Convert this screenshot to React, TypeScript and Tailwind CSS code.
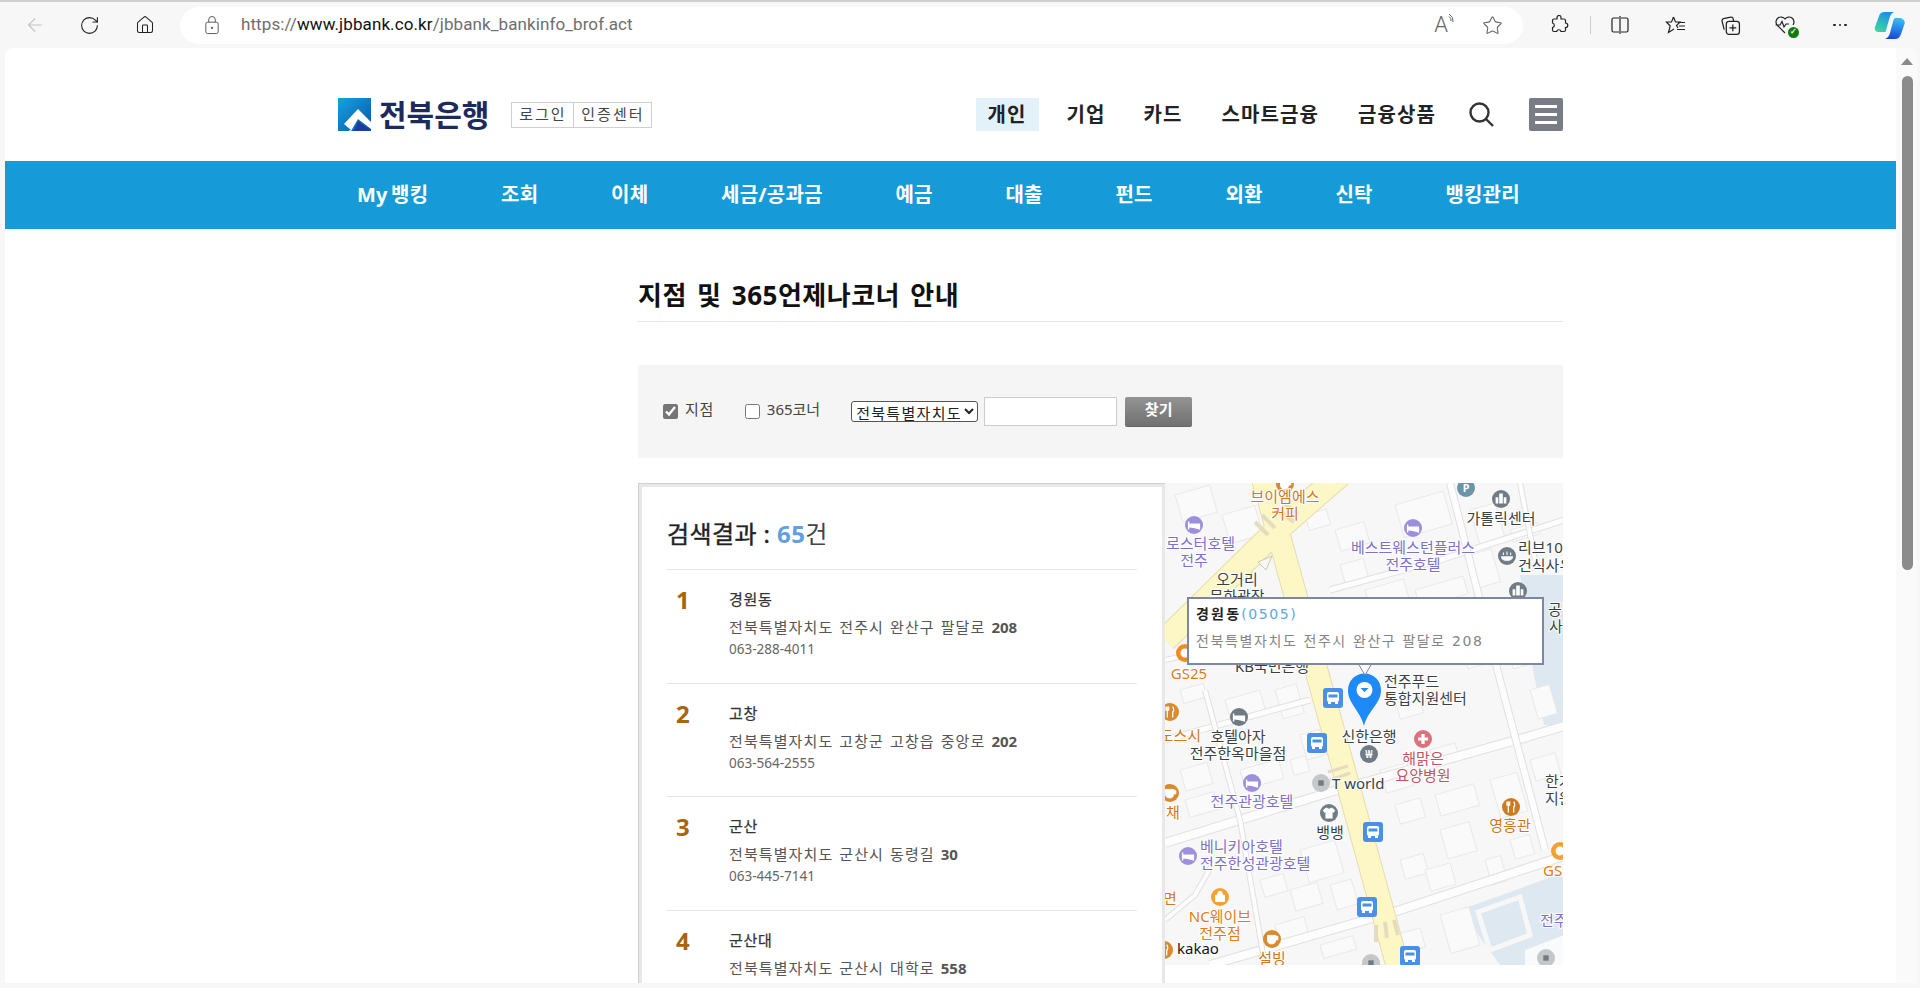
import React from "react";
import { ArrowLeft, RotateCw, Home, Star } from "lucide-react";

const NAV_TOP = ["기업", "카드", "스마트금융", "금융상품"];
const NAV_MAIN = ["My 뱅킹", "조회", "이체", "세금/공과금", "예금", "대출", "펀드", "외환", "신탁", "뱅킹관리"];
const BRANCHES = [
  { no: 1, name: "경원동", addr: "전북특별자치도 전주시 완산구 팔달로", num: "208", tel: "063-288-4011" },
  { no: 2, name: "고창", addr: "전북특별자치도 고창군 고창읍 중앙로", num: "202", tel: "063-564-2555" },
  { no: 3, name: "군산", addr: "전북특별자치도 군산시 동령길", num: "30", tel: "063-445-7141" },
  { no: 4, name: "군산대", addr: "전북특별자치도 군산시 대학로", num: "558", tel: "" },
];

// map drawing data, in page coordinates (viewBox starts at the map's corner)
const ROADS: [string, number][] = [
  ["M1165 843 L1327 793 L1527 737 L1564 726", 8],
  ["M1210 965 L1400 910 L1543 863 L1564 856", 8],
  ["M1330 590 L1440 560 L1564 520", 5],
  ["M1450 483 L1500 680 L1545 850", 6],
  ["M1165 740 L1215 726 L1310 700", 5],
  ["M1205 690 L1240 820 L1265 965", 4],
  ["M1165 920 L1195 895 L1215 860", 4],
  ["M1165 660 L1255 640", 4],
  ["M1520 483 L1535 560", 4],
];
const BLOCKS: number[][] = [
  [1175, 495, 36, 28], [1222, 515, 34, 30], [1305, 515, 22, 16], [1335, 530, 30, 22], [1340, 565, 24, 20],
  [1395, 505, 50, 34], [1365, 590, 40, 20], [1415, 590, 50, 18], [1470, 510, 26, 36], [1470, 555, 22, 34],
  [1510, 530, 28, 12], [1505, 640, 26, 30], [1530, 690, 20, 30], [1180, 690, 24, 14], [1225, 700, 36, 24],
  [1275, 690, 22, 30], [1300, 735, 20, 26], [1180, 770, 28, 22], [1185, 800, 30, 18], [1240, 770, 40, 20],
  [1290, 760, 16, 16], [1435, 795, 40, 22], [1430, 750, 26, 18], [1380, 770, 28, 24], [1395, 805, 26, 20],
  [1440, 830, 30, 30], [1400, 860, 24, 20], [1425, 870, 26, 22], [1300, 850, 36, 34], [1260, 880, 24, 18],
  [1290, 890, 28, 22], [1330, 885, 22, 26], [1275, 925, 30, 18], [1320, 945, 34, 14], [1440, 915, 30, 40],
  [1395, 935, 26, 20], [1490, 780, 28, 40], [1485, 860, 16, 26], [1510, 840, 20, 20], [1530, 760, 26, 22],
  [1190, 620, 30, 12], [1280, 640, 30, 18], [1460, 640, 22, 30], [1395, 700, 24, 20],
];
const LABELS: [string, number, number, string, ("middle" | "start" | "end")?][] = [
  ["브이엠에스", 1285, 502, "#d0761c"], ["커피", 1285, 519, "#d0761c"],
  ["로스터호텔", 1235, 549, "#7d70c8", "end"], ["전주", 1194, 566, "#7d70c8"],
  ["가톨릭센터", 1501, 524, "#3a3f44"], ["베스트웨스턴플러스", 1413, 553, "#7d70c8"], ["전주호텔", 1413, 570, "#7d70c8"],
  ["리브10", 1518, 553, "#3a3f44", "start"], ["건식사우", 1518, 571, "#3a3f44", "start"],
  ["오거리", 1237, 585, "#3a3f44"], ["문화광장", 1237, 602, "#3a3f44"],
  ["공덕", 1548, 615, "#3a3f44", "start"], ["사", 1549, 632, "#3a3f44", "start"],
  ["GS25", 1189, 679, "#e07b1a"], ["KB국민은행", 1272, 672, "#3a3f44"],
  ["전주푸드", 1384, 687, "#3a3f44", "start"], ["통합지원센터", 1384, 704, "#3a3f44", "start"],
  ["신한은행", 1369, 742, "#3a3f44"], ["호텔아자", 1238, 742, "#3a3f44"], ["전주한옥마을점", 1238, 759, "#3a3f44"],
  ["도스시", 1201, 741, "#d0761c", "end"], ["해맑은", 1423, 764, "#c4545f"], ["요양병원", 1423, 781, "#c4545f"],
  ["T world", 1332, 789, "#3a3f44", "start"], ["전주관광호텔", 1252, 807, "#7d70c8"], ["채", 1173, 818, "#d0761c"],
  ["영흥관", 1510, 831, "#d0761c"], ["한가", 1545, 787, "#3a3f44", "start"], ["지원", 1545, 804, "#3a3f44", "start"],
  ["뱅뱅", 1330, 838, "#3a3f44"], ["베니키아호텔", 1200, 852, "#7d70c8", "start"], ["전주한성관광호텔", 1200, 869, "#7d70c8", "start"],
  ["면", 1170, 904, "#d0761c"], ["NC웨이브", 1220, 922, "#e07b1a"], ["전주점", 1220, 939, "#e07b1a"],
  ["kakao", 1177, 954, "#111111", "start"], ["설빙", 1272, 964, "#d0761c"],
  ["GS2", 1543, 876, "#e07b1a", "start"], ["전주", 1540, 926, "#7d70c8", "start"],
];
const POIS: [number, number, string, string][] = [
  [1285, 484, "#d98a2e", "cup"], [1194, 525, "#9d8fdb", "bed"], [1466, 488, "#6c94a9", "P"], [1501, 499, "#6f7c85", "bldg"],
  [1413, 528, "#9d8fdb", "bed"], [1507, 556, "#6f7c85", "spa"], [1518, 591, "#6f7c85", "bldg"], [1185, 653, "#f08a24", "ring"],
  [1239, 717, "#6f7c85", "bed"], [1170, 712, "#d98a2e", "fork"], [1369, 754, "#6f7c85", "won"], [1423, 739, "#d9737d", "plus"],
  [1321, 783, "#c5c7c9", "dot"], [1252, 783, "#9d8fdb", "bed"], [1170, 793, "#d98a2e", "cup"], [1511, 807, "#cf7a1e", "fork"],
  [1329, 813, "#6f7c85", "shirt"], [1188, 856, "#9d8fdb", "bed"], [1220, 897, "#f5a030", "bag"], [1164, 950, "#d98a2e", "fork"],
  [1272, 939, "#d98a2e", "cup"], [1560, 851, "#f5a030", "ring"], [1371, 963, "#c5c7c9", "dot"], [1546, 958, "#c5c7c9", "dot"],
];
const BUSES = [[1333, 698], [1317, 743], [1373, 832], [1367, 907], [1410, 956]];

// white glyph inside a round map marker
const PoiGlyph = ({ kind, c }: { kind: string; c: string }) => {
  if (kind === "bed") return <path d="M-6 -4 V5 M-6 2 H6 V5 M6 2 V-1 H-2 V2 M-5 -1 h2 v2 h-2 z" stroke="#fff" strokeWidth="1.6" fill="#fff" />;
  if (kind === "P") return <text x="0" y="4.500" textAnchor="middle" fill="#fff" className="text-[12px] font-bold">P</text>;
  if (kind === "bldg") return <path d="M-2 5 V-6 H2 V5 Z M-6 5 V-2 H-3 V5 Z M3 5 V-2 H6 V5 Z" fill="#fff" />;
  if (kind === "spa") return <path d="M-6 1 C-6 6 6 6 6 1 Z M-4 -1 V-4 M0 -1 V-5 M4 -1 V-4" fill="#fff" stroke="#fff" strokeWidth="1.2" />;
  if (kind === "ring") return <circle r="5" fill="#fff" />;
  if (kind === "cup") return <path d="M-5 -4 H4 V1 A4 4 0 0 1 -5 1 Z M4 -3 H6.500 V1 H4" fill="#fff" stroke="#fff" />;
  if (kind === "fork") return <path d="M-3 -6 V-1 M-4.500 -6 V-2 H-1.500 V-6 M-3 -2 V6 M3 -6 C5 -3 4 0 3 0 V6" fill="none" stroke="#fff" strokeWidth="1.4" />;
  if (kind === "won") return <text x="0" y="4" textAnchor="middle" fill="#fff" className="text-[11px] font-bold">₩</text>;
  if (kind === "plus") return <path d="M-1.800 -5.500 H1.800 V-1.800 H5.500 V1.800 H1.800 V5.500 H-1.800 V1.800 H-5.500 V-1.800 H-1.800 Z" fill="#fff" />;
  if (kind === "dot") return <rect x="-3" y="-3" width="6" height="6" fill="#6f7c85" />;
  if (kind === "shirt") return <path d="M-3 -6 L-7 -3 L-5 0 L-4 -1 V6 H4 V-1 L5 0 L7 -3 L3 -6 Q0 -3.500 -3 -6 Z" fill="#fff" />;
  if (kind === "bag") return <path d="M-5 -2 H5 V5 H-5 Z M-2.500 -2 V-4 a2.500 2.500 0 0 1 5 0 V-2" fill="#fff" stroke="#fff" />;
  return <rect x="-4" y="-3" width="8" height="6" fill="#fff" stroke={c} />;
};

const BranchMap = () => (
  <div className="relative h-[482px] w-[398px] shrink-0 overflow-hidden">
    <svg viewBox="1165 483 398 482" className="block h-[482px] w-[398px] bg-[#f7f7f7]">
      <path d="M1520 575 h44 v150 h-20 l-12 -60 z" fill="#dde8f0" />
      <path d="M1460 910 L1543 880 L1564 872 V965 H1500 Z" fill="#dde8f0" />
      <path d="M1478 912 L1520 897 L1530 935 L1490 950 Z" fill="#dde8f0" stroke="#f7f7f7" strokeWidth="5" />
      <path d="M1525 950 L1564 935 V965 H1525 Z" fill="#f8fafb" />
      {BLOCKS.map(([x, y, w, h]) => (
        <rect
          key={`${x}-${y}`}
          x={x}
          y={y}
          width={w}
          height={h}
          fill="#fafafa"
          stroke="#e8e8e8"
          transform={`rotate(-16 ${x} ${y})`}
        />
      ))}
      {ROADS.map(([d, w]) => (
        <g key={d} fill="none">
          <path d={d} stroke="#e0e0e0" strokeWidth={w + 2} />
          <path d={d} stroke="#fdfdfd" strokeWidth={w} />
        </g>
      ))}
      <g fill="none">
        <path d="M1262 475 L1333 730 L1400 975" stroke="#e6dcae" strokeWidth="24" />
        <path d="M1340 475 L1277 530 L1165 640" stroke="#e6dcae" strokeWidth="25" />
        <path d="M1262 475 L1333 730 L1400 975" stroke="#fdf6c5" strokeWidth="22" />
        <path d="M1340 475 L1277 530 L1165 640" stroke="#fdf6c5" strokeWidth="23" />
      </g>
      <path d="M1258 562 L1272 556 L1266 570 Z" fill="#f7f7f7" stroke="#cfc9a8" />
      <g stroke="#e4dcc0" strokeWidth="4">
        <path d="M1255 522 L1268 535 M1262 515 L1275 528 M1280 512 L1294 522 M1284 504 L1298 514" />
        <path d="M1328 772 L1348 766 M1330 780 L1350 773" strokeWidth="3" />
        <path d="M1376 925 L1376 942 M1385 922 L1387 938 M1394 920 L1398 935" />
      </g>
      {POIS.map(([x, y, c, kind]) => (
        <g key={`${x}-${y}`} transform={`translate(${x} ${y})`}>
          <circle r="9" fill={c} />
          <g transform="scale(0.9)">
            <PoiGlyph kind={kind} c={c} />
          </g>
        </g>
      ))}
      {LABELS.map(([t, x, y, c, anchor]) => (
        <text
          key={`${t}-${x}`}
          x={x}
          y={y}
          fill={c}
          textAnchor={anchor ?? "middle"}
          stroke="#fff"
          strokeWidth="2"
          className="text-[15px] [paint-order:stroke]"
        >
          {t}
        </text>
      ))}
      {BUSES.map(([x, y]) => (
        <g key={x}>
          <rect x={x - 10} y={y - 10} width="20" height="20" rx="3" fill="#4a90e8" />
          <rect x={x - 6} y={y - 6} width="12" height="10" rx="2" fill="#fff" />
          <rect x={x - 4.5} y={y - 3.5} width="9" height="3" fill="#4a90e8" />
          <rect x={x - 5} y={y + 4} width="3" height="2" fill="#fff" />
          <rect x={x + 2} y={y + 4} width="3" height="2" fill="#fff" />
        </g>
      ))}
      <path d="M1364 726 C1360 710 1348 704 1348 690 A16.5 16.5 0 0 1 1381 690 C1381 704 1368 710 1364 726 Z" fill="#1e8af7" />
      <circle cx="1364.5" cy="690" r="8" fill="#fff" />
      <path d="M1360.5 688 h8 l-4 4 z" fill="#1e8af7" />
      <path d="M1359 665 L1365 675 L1371 665" fill="#fff" stroke="#7d86a5" />
    </svg>
    {/* info window over the marker */}
    <div className="absolute left-[22px] top-[114px] h-[68px] w-[357px] border-2 border-[#7d86a5] bg-white pl-[7px] pt-[3px] font-['DejaVu_Sans','Noto_Sans_CJK_KR',sans-serif]">
      <p className="text-[14px] font-bold leading-[24px] tracking-[2.2px] text-[#222]">
        경원동<span className="font-normal tracking-[1.6px] text-[#5aa9e6]">(0505)</span>
      </p>
      <p className="mt-[3px] text-[14px] leading-[24px] tracking-[1.6px] text-[#858585]">전북특별자치도 전주시 완산구 팔달로 208</p>
    </div>
  </div>
);

const BrowserBar = () => (
  <div className="flex h-12 shrink-0 items-center border-t-2 border-[#cfcfcf] bg-[#f7f7f7] font-['Roboto',sans-serif]">
    <div className="flex w-[180px] shrink-0 items-center text-[#222]">
      <ArrowLeft className="ml-[24px] h-[22px] w-[22px] text-[#c4c4c4]" strokeWidth={1.25} />
      <RotateCw className="ml-[33px] h-[21px] w-[21px]" strokeWidth={1.25} />
      <Home className="ml-[35px] h-[20px] w-[20px]" strokeWidth={1.25} />
    </div>
    <div className="flex h-[37px] w-[1343px] shrink-0 items-center rounded-full bg-white">
      <svg viewBox="0 0 16 20" className="ml-[24px] h-[19px] w-[16px]" fill="none" stroke="#555">
        <rect x="1.5" y="6.5" width="13" height="12" rx="2" />
        <path d="M4.5 6.5 V4 a3.5 3.5 0 0 1 7 0 V6.5" />
        <circle cx="8" cy="12.5" r="0.8" fill="#555" />
      </svg>
      <span className="ml-[21px] text-[17px] tracking-[0.1px] text-[#6e6e6e]">
        https://<span className="text-[#111]">www.jbbank.co.kr</span>/jbbank_bankinfo_brof.act
      </span>
      <div className="ml-auto flex items-center pr-[20px]">
        <span className="relative text-[22px] font-light leading-none text-[#666]">
          A
          <svg viewBox="0 0 8 10" className="absolute -right-[8px] -top-[1px] h-[10px] w-[8px]" fill="none" stroke="#666">
            <path d="M1 1 Q6 4 5 9 M1 3.5 Q3.5 5 3 8" />
          </svg>
        </span>
        <Star className="ml-[34px] h-[21px] w-[21px] text-[#666]" strokeWidth={1.25} />
      </div>
    </div>
    <div className="relative flex flex-1 items-center text-[#222]">
      <svg viewBox="0 0 20 20" className="ml-[26px] h-[20px] w-[20px]" fill="none" stroke="#222" strokeWidth="1.2">
        <path d="M8 2.5 a2 2 0 0 1 4 0 V4 h3 a1.5 1.5 0 0 1 1.5 1.5 V8 a2.3 2.3 0 0 1 0 4.6 V15 a1.5 1.5 0 0 1 -1.5 1.5 H12 a2.2 2.2 0 0 0 -4.3 0 H5 A1.5 1.5 0 0 1 3.5 15 V12.5 a2.3 2.3 0 0 0 0 -4.5 V5.5 A1.5 1.5 0 0 1 5 4 H8 Z" />
      </svg>
      <div className="ml-[21px] h-[18px] w-px bg-[#ccc]" />
      <svg viewBox="0 0 20 20" className="ml-[19px] h-[20px] w-[20px]" fill="none" stroke="#222" strokeWidth="1.2">
        <path d="M9 3 H3.5 A1.5 1.5 0 0 0 2 4.5 V15.5 A1.5 1.5 0 0 0 3.5 17 H9 M11 3 H16.5 A1.5 1.5 0 0 1 18 4.5 V15.5 A1.5 1.5 0 0 1 16.5 17 H11 M10 1 V19" />
      </svg>
      <svg viewBox="0 0 22 20" className="ml-[35px] h-[20px] w-[22px]" fill="none" stroke="#222" strokeWidth="1.2">
        <path d="M8.5 2 L10.5 7 H15 L11.5 10.5 L13 13 M8.5 2 L6.5 7 H1.5 L5.2 11 L3.5 17.5 L9 14" />
        <path d="M13 7.5 H20 M14 11 H20 M12 14.5 H20" />
      </svg>
      <svg viewBox="0 0 20 20" className="ml-[33px] h-[21px] w-[21px]" fill="none" stroke="#222" strokeWidth="1.2">
        <rect x="6" y="6" width="12.5" height="12.5" rx="2.5" />
        <path d="M12.2 9 V15.5 M9 12.2 H15.5 M4 14 L2 6 a2 2 0 0 1 1.5 -2.5 L10 2 a2 2 0 0 1 2.5 1.5 L13 6" />
      </svg>
      <div className="relative ml-[33px] h-[21px] w-[22px]">
        <svg viewBox="0 0 22 21" className="h-[21px] w-[22px]" fill="none" stroke="#222" strokeWidth="1.2">
          <path d="M11 18 L3 10 a4.8 4.8 0 0 1 8 -6 a4.8 4.8 0 0 1 8 6 M1.5 10 H6 L8 6.5 L10 12 L12 9 H15" />
        </svg>
        <span className="absolute -bottom-[2px] -right-[3px] flex h-[11px] w-[11px] items-center justify-center rounded-full bg-[#107c10] text-[8px] font-bold leading-none text-white">
          ✓
        </span>
      </div>
      <div className="ml-[37px] flex gap-[3px]">
        <span className="h-[2.5px] w-[2.5px] rounded-full bg-[#222]" />
        <span className="h-[2.5px] w-[2.5px] rounded-full bg-[#222]" />
        <span className="h-[2.5px] w-[2.5px] rounded-full bg-[#222]" />
      </div>
      <svg viewBox="0 0 31 27" className="ml-[27px] h-[27px] w-[31px]">
        <defs>
          <linearGradient id="cpA" x1="0.7" y1="0" x2="0.2" y2="1">
            <stop offset="0" stopColor="#1b8fe8" />
            <stop offset="1" stopColor="#3fd6a0" />
          </linearGradient>
          <linearGradient id="cpB" x1="0.6" y1="0" x2="0.4" y2="1">
            <stop offset="0" stopColor="#35c0f5" />
            <stop offset="1" stopColor="#1a45d8" />
          </linearGradient>
        </defs>
        <path d="M10 0 H20 C17.500 1 16.500 3 15.500 6 L11.500 20 H5 C2 20 0 18 1 15 L5 4 C6 1 8 0 10 0 Z" fill="url(#cpA)" />
        <path d="M21 6 H25.500 C29 6 31.500 9 30.500 12 L27 22 C26 25 24 27 21 27 H11 C14 26 15 24 16 21 L19.500 8 C20 7 20.500 6 21 6 Z" fill="url(#cpB)" />
      </svg>
    </div>
  </div>
);

const Header = () => (
  <header className="flex h-[113px] items-center pl-[333px] pr-[333px] pt-[20px]">
    <svg viewBox="0 0 33 33" className="h-[33px] w-[33px] shrink-0">
      <defs>
        <linearGradient id="lgA" x1="0" y1="0" x2="1" y2="1">
          <stop offset="0" stopColor="#16a3de" />
          <stop offset="1" stopColor="#0a55a8" />
        </linearGradient>
      </defs>
      <rect width="33" height="33" fill="url(#lgA)" />
      <path d="M16 33 L20 23 L33 33 Z" fill="#1c3d98" />
      <path d="M6 26 L20 11 L33 24 V31 L20 21 L13 33 H10 L13 32 Z" fill="#fff" />
    </svg>
    <span className="ml-[8px] text-[30px] font-bold leading-none text-[#1c2b5c]">전북은행</span>
    <div className="ml-[22px] flex h-[26px] items-center border border-[#cfcfcf] text-[15px] leading-none tracking-[2px] text-[#444]">
      <span className="flex h-full w-[62px] items-center justify-center border-r border-[#cfcfcf]">로그인</span>
      <span className="flex h-full w-[77px] items-center justify-center">인증센터</span>
    </div>
    <nav className="ml-auto flex items-center text-[20px] font-bold tracking-[1.1px] text-[#222]">
      <span className="flex h-[33px] w-[63px] items-center justify-center bg-[#e3f1f9]">개인</span>
      <span className="ml-[28px]">{NAV_TOP[0]}</span>
      <span className="ml-[38px]">{NAV_TOP[1]}</span>
      <span className="ml-[39px]">{NAV_TOP[2]}</span>
      <span className="ml-[39px]">{NAV_TOP[3]}</span>
      <svg viewBox="0 0 25 25" className="ml-[33px] h-[25px] w-[25px]" fill="none" stroke="#333" strokeWidth="2.4">
        <circle cx="10.5" cy="10.5" r="9" />
        <path d="M17 17 L24 24" />
      </svg>
      <div className="ml-[35px] flex h-[33px] w-[34px] flex-col items-center justify-center gap-[5px] rounded-[2px] bg-[#797c85]">
        <span className="h-[3px] w-[22px] bg-white" />
        <span className="h-[3px] w-[22px] bg-white" />
        <span className="h-[3px] w-[22px] bg-white" />
      </div>
    </nav>
  </header>
);

const SearchBox = () => (
  <div className="mt-[43px] flex h-[93px] items-center bg-[#f5f5f5] pl-[25px] text-[15px] text-[#444]">
    <label className="flex items-center">
      <input type="checkbox" defaultChecked className="h-[15px] w-[15px] accent-[#757575]" />
      <span className="ml-[7px] -translate-y-[2px] tracking-[0.6px]">지점</span>
    </label>
    <label className="ml-[31px] flex items-center">
      <input type="checkbox" className="h-[15px] w-[15px]" />
      <span className="ml-[7px] -translate-y-[2px]">365코너</span>
    </label>
    <select className="ml-[31px] h-[21px] w-[127px] rounded-[3px] border border-[#555] bg-white text-[15px] tracking-[1.3px] text-[#222]">
      <option>전북특별자치도</option>
    </select>
    <input className="ml-[6px] h-[29px] w-[133px] border border-[#ccc] bg-white" />
    <button className="ml-[8px] h-[30px] w-[67px] rounded-[2px] border-b border-[#666] bg-gradient-to-b from-[#939393] to-[#717171] pb-[3px] text-[15px] font-bold text-white">
      찾기
    </button>
  </div>
);

const ResultList = () => (
  <div className="h-[500px] w-[527px] shrink-0 border-l border-t border-[#cfcfcf]">
    <div className="h-full border-[3px] border-b-0 border-[#e8e8e8] pl-[25px] pr-[25px]">
      <h3 className="mt-[33px] flex h-[28px] items-center text-[24px] leading-none tracking-[0.4px] text-[#222] [-webkit-text-stroke:0.4px]">
        검색결과 :&nbsp;<span className="font-bold text-[#629fdc] [-webkit-text-stroke:0]">65</span>
        <span className="text-[#444] [-webkit-text-stroke:0]">건</span>
      </h3>
      <ul className="mt-[21px]">
        {BRANCHES.map((b) => (
          <li key={b.no} className="flex h-[113.5px] border-t border-[#e5e5e5] pl-[9px]">
            <span className="mt-[15px] w-[53px] text-[24px] font-bold leading-[30px] text-[#a8640f]">{b.no}</span>
            <div>
              <p className="mt-[19px] text-[15px] leading-[20px] tracking-[0.7px] text-[#333] [-webkit-text-stroke:0.25px]">{b.name}</p>
              <p className="mt-[8px] text-[15px] leading-[20px] tracking-[1.1px] text-[#555] [word-spacing:1px]">
                {b.addr} <span className="font-bold tracking-normal">{b.num}</span>
              </p>
              {b.tel && <p className="mt-[2px] text-[13.5px] leading-[20px] text-[#666]">{b.tel}</p>}
            </div>
          </li>
        ))}
      </ul>
    </div>
  </div>
);

export default function App() {
  return (
    <div className="flex h-[988px] w-[1920px] flex-col overflow-hidden bg-[#f7f7f7] font-['Noto_Sans','Noto_Sans_CJK_KR',sans-serif]">
      <BrowserBar />
      <div className="ml-[5px] mr-[3px] flex h-[935px] shrink-0 overflow-hidden rounded-t-[8px] bg-white">
        <main className="w-[1891px] shrink-0">
          <Header />
          <nav className="flex h-[68px] items-center gap-[72.8px] bg-[#169bd8] pl-[352px] text-[20px] font-bold tracking-[0.2px] text-white [word-spacing:-2px]">
            {NAV_MAIN.map((n) => (
              <span key={n}>{n}</span>
            ))}
          </nav>
          <section className="ml-[633px] w-[925px]">
            <h2 className="mt-[48px] h-[44px] text-[26px] font-bold leading-[36px] tracking-[0.5px] text-[#111] [word-spacing:3px]">
              지점 및 365언제나코너 안내
            </h2>
            <div className="border-t border-[#e5e5e5]" />
            <SearchBox />
            <div className="mt-[25px] flex">
              <ResultList />
              <BranchMap />
            </div>
          </section>
        </main>
        <div className="flex w-[21px] shrink-0 flex-col items-center bg-[#fafafa] pl-[1px]">
          <div className="mt-[10px] h-0 w-0 border-x-[6px] border-b-[7px] border-x-transparent border-b-[#8b8b8b]" />
          <div className="mt-[11px] h-[494px] w-[11px] rounded-full bg-[#8b8b8b]" />
        </div>
      </div>
    </div>
  );
}
